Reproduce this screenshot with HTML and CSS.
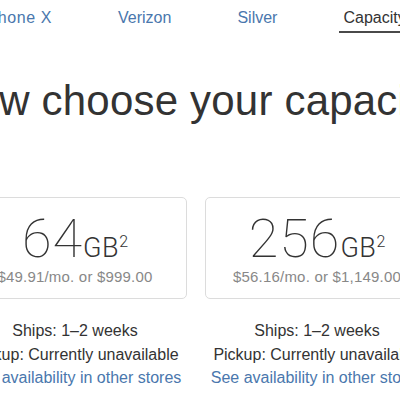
FILE: index.html
```html
<!DOCTYPE html>
<html lang="en">
<head>
<meta charset="utf-8">
<title>Choose your capacity</title>
<link rel="stylesheet" href="styles.css">
</head>
<body>
<div class="page">
  <nav class="steps">
    <a class="step" href="#">iPhone X</a>
    <a class="step" href="#">Verizon</a>
    <a class="step" href="#">Silver</a>
    <span class="step active">Capacity</span>
  </nav>
  <h1 class="title">Now choose your capacity.</h1>
  <div class="options">
    <div class="option">
      <div class="card">
        <div class="size"><span class="num">64</span><span class="unit">GB</span><sup class="note">2</sup></div>
        <div class="price">$49.91/mo. or $999.00</div>
      </div>
      <div class="avail">
        <p>Ships: 1–2 weeks</p>
        <p>Pickup: Currently unavailable</p>
        <p><a href="#">See availability in other stores</a></p>
      </div>
    </div>
    <div class="option">
      <div class="card">
        <div class="size"><span class="num">256</span><span class="unit">GB</span><sup class="note">2</sup></div>
        <div class="price">$56.16/mo. or $1,149.00</div>
      </div>
      <div class="avail">
        <p>Ships: 1–2 weeks</p>
        <p>Pickup: Currently unavailable</p>
        <p><a href="#">See availability in other stores</a></p>
      </div>
    </div>
  </div>
</div>
</body>
</html>
```

FILE: styles.css
```css
html, body {
  margin: 0;
  padding: 0;
  background: #fff;
  overflow: hidden;
}
body {
  width: 400px;
  height: 400px;
  font-family: "Liberation Sans", Arial, sans-serif;
  color: #333;
}
.page {
  width: 600px;
  margin-left: -103px;
  display: flex;
  flex-direction: column;
  align-items: center;
}
.steps {
  display: flex;
  gap: 58px;
  padding-top: 9px;
  margin-left: -6px;
}
.step {
  display: block;
  padding: 0 4px 4px;
  line-height: 18px;
  font-size: 16px;
  color: #4a77ad;
  text-decoration: none;
  border-bottom: 2px solid transparent;
  white-space: nowrap;
}
.step:first-child {
  letter-spacing: 0.6px;
}
.step.active {
  color: #333;
  border-bottom-color: #4a4a4a;
}
.title {
  margin: 43px 0 0;
  font-size: 42px;
  line-height: 50px;
  font-weight: normal;
  color: #333;
  white-space: nowrap;
  letter-spacing: 0.2px;
}
.options {
  display: flex;
  gap: 18px;
  margin-top: 71px;
  margin-left: -2px;
}
.option {
  width: 224px;
  text-align: center;
}
.card {
  border: 1px solid #dcdcdc;
  border-radius: 5px;
  height: 100px;
}
.size {
  padding-top: 17px;
  height: 48px;
  line-height: 48px;
  font-family: Roboto, "Liberation Sans", sans-serif;
  white-space: nowrap;
}
.num {
  font-size: 54px;
  font-weight: 100;
  color: #333;
  letter-spacing: 1px;
}
.unit {
  font-size: 27px;
  font-weight: 300;
  color: #333;
  letter-spacing: 0.5px;
}
.note {
  font-size: 16px;
  font-weight: 300;
  vertical-align: 10px;
  line-height: 0;
}
.price {
  margin-top: 4px;
  font-size: 15px;
  line-height: 20px;
  color: #888;
  white-space: nowrap;
  letter-spacing: 0.2px;
}
.avail {
  margin-top: 20px;
  font-size: 16px;
  line-height: 23.5px;
  white-space: nowrap;
}
.avail p {
  margin: 0;
}
.avail a {
  color: #4a77ad;
  text-decoration: none;
}
```
